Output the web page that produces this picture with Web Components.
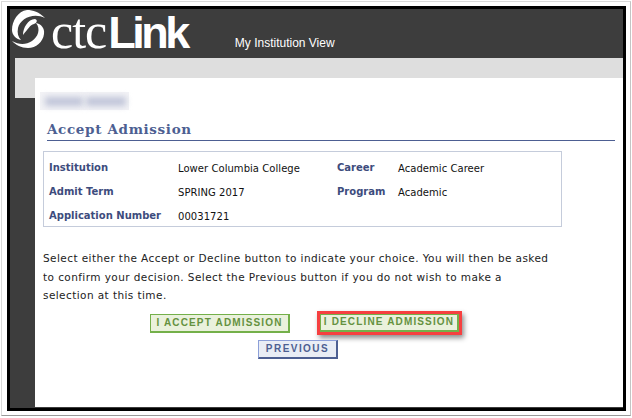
<!DOCTYPE html>
<html>
<head>
<meta charset="utf-8">
<title>Accept Admission</title>
<style>
	html, body { margin: 0; padding: 0; background: #fff; }
	body { width: 632px; height: 418px; overflow: hidden; }
</style>
</head>
<body>
<shot-frame>
	<site-header>My Institution View</site-header>
	<admission-page heading="Accept Admission">
		<info-box>
			<info-row slot="a" label="Institution">Lower Columbia College</info-row>
			<info-row slot="a" label="Admit Term">SPRING 2017</info-row>
			<info-row slot="a" label="Application Number">00031721</info-row>
			<info-row slot="b" label="Career">Academic Career</info-row>
			<info-row slot="b" label="Program">Academic</info-row>
		</info-box>
	</admission-page>
</shot-frame>

<script>
	window.customElements.define(
		'shot-frame',
		class extends HTMLElement {
			constructor() {
				super();
				const root = this.attachShadow({ mode: 'open' });
				root.innerHTML = `
					<style>
						:host {
							display: block;
							box-sizing: border-box;
							width: 632px;
							height: 418px;
							padding: 1px 1px 2px 1px;
							background: #fff;
						}
						.edge {
							box-sizing: border-box;
							height: 100%;
							border-style: solid;
							border-color: #d9d9d9 #c4c4c4 #9a9a9a #d9d9d9;
							border-width: 1px 1px 1px 1px;
							padding: 4px 4px 4px 5px;
						}
						.black {
							box-sizing: border-box;
							height: 100%;
							border: 3px solid #000;
							background: #3d3d3d;
							display: flex;
							flex-direction: column;
							overflow: hidden;
						}
					</style>
					<div class="edge"><div class="black"><slot></slot></div></div>
				`;
			}
		}
	);

	window.customElements.define(
		'site-header',
		class extends HTMLElement {
			constructor() {
				super();
				const root = this.attachShadow({ mode: 'open' });
				root.innerHTML = `
					<style>
						:host {
							display: flex;
							flex: none;
							height: 49px;
							color: #fff;
						}
						svg { flex: none; margin: 0 0 0 1px; display: block; }
						.ctc {
							font: 50px/40px "Liberation Serif", serif;
							margin: 2px 0 0 4px;
							letter-spacing: -1px;
						}
						.link {
							font: bold 45px/40px "Liberation Sans", sans-serif;
							margin: 4px 0 0 2px;
							letter-spacing: -3.5px;
						}
						.view {
							font: 12px/14px "Liberation Sans", sans-serif;
							margin: 27px 0 0 48px;
						}
					</style>
					<svg width="36" height="42" viewBox="0 0 36 42">
						<path fill="#fff" d="M34 9 C28 3 22 1 16 1 C7 2 1 12 1 21 C1 26 5 30 10 31 C7 28 6 24 7 19 C9 10 22 3 34 9 Z"/>
						<path fill="#fff" d="M24 10 C27 11 26 14 23 15 C19 16 17 20 12 26 C12 19 17 10 24 10 Z"/>
						<path fill="#fff" d="M25 14 C30 15 34 19 33 25 C32 33 25 39 17 39 C10 39 5 36 1 32 C8 36 15 36 21 32 C27 28 30 20 25 14 Z"/>
					</svg>
					<span class="ctc">ctc</span><span class="link">Link</span>
					<span class="view"><slot></slot></span>
				`;
			}
		}
	);

	window.customElements.define(
		'admission-page',
		class extends HTMLElement {
			constructor() {
				super();
				const root = this.attachShadow({ mode: 'open' });
				root.innerHTML = `
					<style>
						:host {
							display: block;
							flex: 1;
							min-height: 0;
						}
						.band { height: 40px; margin-left: 5px; background: #dedede; }
						.card {
							box-sizing: border-box;
							height: 329px;
							margin: -20px 0 0 25px;
							padding: 14px 8px 0 8px;
							background: #fff;
							position: relative;
						}
						.blur {
							box-sizing: border-box;
							width: 89px;
							height: 18px;
							margin-left: -3px;
							padding: 0 3px 0 5px;
							background: #f3f3f6;
							display: flex;
							align-items: center;
							gap: 3px;
						}
						.blur i {
							display: block;
							height: 9px;
							background: #bfc4d8;
							filter: blur(3px);
						}
						h1 {
							margin: 11px 0 0 4px;
							padding: 0 0 3px 0;
							font: bold 13.5px/16px "DejaVu Serif", serif;
							letter-spacing: 0.65px;
							color: #4d5f92;
							border-bottom: 1px solid #4d5f92;
						}
						.box { margin-top: 10px; width: 519px; }
						p {
							margin: 22px 0 0 0;
							width: 510px;
							font: 10.5px/18.5px "DejaVu Sans", sans-serif;
							letter-spacing: 0.42px;
							color: #222;
						}
						.actions { display: flex; margin: 9px 0 0 107px; }
						.actions2 { display: flex; margin: 7px 0 0 215px; }
						.actions action-button + action-button { margin-left: 30px; }
					</style>
					<div class="band"></div>
					<div class="card">
						<div class="blur"><i style="width:38px"></i><i style="width:40px"></i></div>
						<h1></h1>
						<div class="box"><slot></slot></div>
						<p>Select either the Accept or Decline button to indicate your choice. You will then be asked to confirm your decision. Select the Previous button if you do not wish to make a selection at this time.</p>
						<div class="actions">
							<action-button tone="green" style="width:140px">I ACCEPT ADMISSION</action-button>
							<action-button tone="green" marked style="width:139px">I DECLINE ADMISSION</action-button>
						</div>
						<div class="actions2">
							<action-button tone="blue" style="width:80px">PREVIOUS</action-button>
						</div>
					</div>
				`;
				root.querySelector('h1').textContent = this.getAttribute('heading');
			}
		}
	);

	window.customElements.define(
		'info-box',
		class extends HTMLElement {
			constructor() {
				super();
				const root = this.attachShadow({ mode: 'open' });
				root.innerHTML = `
					<style>
						:host {
							display: flex;
							box-sizing: border-box;
							height: 76px;
							padding: 5px 0 0 5px;
							border: 1px solid #c5ccdb;
						}
						.col { display: flex; flex-direction: column; }
						.a { width: 288px; --label-width: 129px; }
						.b { --label-width: 61px; }
					</style>
					<div class="col a"><slot name="a"></slot></div>
					<div class="col b"><slot name="b"></slot></div>
				`;
			}
		}
	);

	window.customElements.define(
		'info-row',
		class extends HTMLElement {
			constructor() {
				super();
				const root = this.attachShadow({ mode: 'open' });
				root.innerHTML = `
					<style>
						:host {
							display: flex;
							flex: none;
							height: 24px;
							align-items: center;
						}
						.label {
							flex: none;
							width: var(--label-width);
							margin-top: -2px;
							font: bold 10px/14px "DejaVu Sans", sans-serif;
							color: #3d4c7d;
						}
						.value {
							font: 10px/14px "DejaVu Sans", sans-serif;
							letter-spacing: 0.05px;
							color: #111;
						}
					</style>
					<span class="label"></span><span class="value"><slot></slot></span>
				`;
				root.querySelector('.label').textContent = this.getAttribute('label');
			}
		}
	);

	window.customElements.define(
		'action-button',
		class extends HTMLElement {
			constructor() {
				super();
				const root = this.attachShadow({ mode: 'open' });
				root.innerHTML = `
					<style>
						:host {
							display: block;
							box-sizing: border-box;
							height: 19px;
							font: bold 10px/15px "Liberation Sans", sans-serif;
							letter-spacing: 1.45px;
							text-align: center;
							white-space: nowrap;
						}
						:host([tone="green"]) {
							color: #65913f;
							background: #eaf1dc;
							border: 2px solid #74b04a;
							border-width: 1px 2px 2px 1px;
							letter-spacing: 1.15px;
						}
						:host([tone="blue"]) {
							color: #4d5f92;
							background: #e9edf5;
							border: 1px solid #8c9fd8;
							border-right: 2px solid #4d5f92;
							border-bottom: 2px solid #4d5f92;
						}
						:host([marked]) {
							height: 18px;
							line-height: 14px;
							box-shadow: 0 0 0 3px #f64040, 2px 3px 5px 3px rgba(0,0,0,.45);
						}
					</style>
					<slot></slot>
				`;
			}
		}
	);
</script>
</body>
</html>
